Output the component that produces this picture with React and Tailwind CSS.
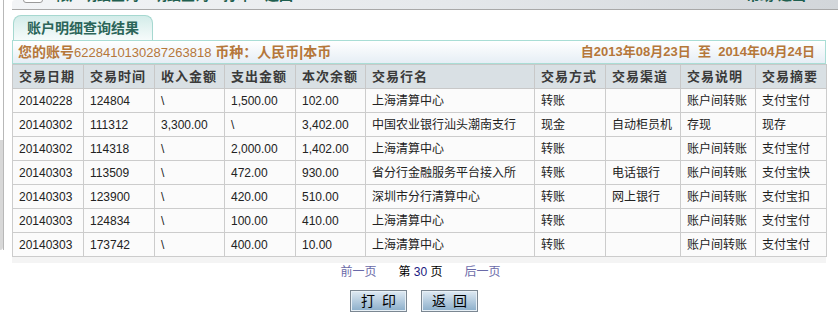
import React from "react"

const cols = [71, 71, 70, 71, 70, 169, 71, 75, 75, 71]

const headers = ["交易日期", "交易时间", "收入金额", "支出金额", "本次余额", "交易行名", "交易方式", "交易渠道", "交易说明", "交易摘要"]

const rows = [
  ["20140228", "124804", "\\", "1,500.00", "102.00", "上海清算中心", "转账", "", "账户间转账", "支付宝付"],
  ["20140302", "111312", "3,300.00", "\\", "3,402.00", "中国农业银行汕头潮南支行", "现金", "自动柜员机", "存现", "现存"],
  ["20140302", "114318", "\\", "2,000.00", "1,402.00", "上海清算中心", "转账", "", "账户间转账", "支付宝付"],
  ["20140303", "113509", "\\", "472.00", "930.00", "省分行金融服务平台接入所", "转账", "电话银行", "账户间转账", "支付宝快"],
  ["20140303", "123900", "\\", "420.00", "510.00", "深圳市分行清算中心", "转账", "网上银行", "账户间转账", "支付宝扣"],
  ["20140303", "124834", "\\", "100.00", "410.00", "上海清算中心", "转账", "", "账户间转账", "支付宝付"],
  ["20140303", "173742", "\\", "400.00", "10.00", "上海清算中心", "转账", "", "账户间转账", "支付宝付"],
]

function Button({ children }) {
  return (
    <button className="w-[57px] h-[22px] border border-[#7b8792] p-0">
      <div className="h-full border border-[#e8f0f6] bg-gradient-to-b from-[#dbe7f1] to-[#8fb1cc] flex items-center justify-center text-[14px] leading-[16px] text-black tracking-[7px] pl-[7px]">
        {children}
      </div>
    </button>
  )
}

export default function App() {
  return (
    <div className="w-[838px] h-[336px] bg-white overflow-hidden flex font-['Liberation_Sans','Noto_Sans_CJK_SC',sans-serif] text-[12px] text-[#1a1a1a]">
      {/* left frame edge */}
      <div className="w-[4px] h-[250px] flex flex-col border-r border-[#b8b8b8]">
        <div className="h-[140px] bg-white" />
        <div className="flex-1 bg-[#d8d8d8] rounded-br-[3px]" />
      </div>

      <div className="ml-[8px] w-[826px] flex flex-col">
        {/* top bar, mostly scrolled away */}
        <div className="h-[10px] border-b border-[#a8a8a8] rounded-tl-[3px] bg-gradient-to-r from-[#f2f4f6] via-[#e6e9ec] to-[#d2d6da] overflow-hidden relative">
          <div className="absolute left-[11px] top-[-14px] w-[20px] h-[17px] bg-white border border-[#9a9a9a] rounded-[3px]" />
          <div className="absolute left-[43px] top-[-15px] text-[14px] leading-[20px] font-bold text-[#1f5f4f] whitespace-nowrap">
            帐户明细查询　明细查询　打印　返回
          </div>
          <div className="absolute left-[734px] top-[-15px] text-[14px] leading-[20px] font-bold text-[#1f5f4f] whitespace-nowrap">
            帮助 退出
          </div>
        </div>

        {/* tab */}
        <div className="mt-[5px] ml-[1px] w-[140px] h-[25px] border border-b-0 border-[#a6d8d0] rounded-t-[8px] bg-gradient-to-b from-[#d3ece9] to-[#f6fbfb] flex items-center justify-center text-[14px] font-bold text-[#2b6559]">
          账户明细查询结果
        </div>

        <div className="w-[814px]">
          {/* account bar */}
          <div className="h-[24px] border border-[#a9ddd5] bg-gradient-to-b from-[#ffffff] to-[#e6eef5] flex items-center justify-between px-[5px] text-[14px] font-bold text-[#b5773a]">
            <div>
              您的账号<span className="font-normal text-[13px]">6228410130287263818</span> 币种：人民币|本币
            </div>
            <div className="pr-[5px] text-[13px]">自2013年08月23日&nbsp;&nbsp;至&nbsp;&nbsp;2014年04月24日</div>
          </div>

          {/* table */}
          <div className="bg-[#f4f4f4] pb-[6px]">
            <table className="w-[814px] table-fixed border-collapse">
              <colgroup>
                {cols.map((w, i) => (
                  <col key={i} style={{ width: w }} />
                ))}
              </colgroup>
              <thead>
                <tr className="h-[24px] bg-[#d9e0e4]">
                  {headers.map((h) => (
                    <th key={h} className="border border-[#c8c8c8] text-left pl-[6px] text-[13px] leading-[16px] font-bold text-[#3a3a3a] tracking-[1px] whitespace-nowrap">
                      {h}
                    </th>
                  ))}
                </tr>
              </thead>
              <tbody>
                {rows.map((r, ri) => (
                  <tr key={ri} className="h-[24px] bg-[#fbfbfb]">
                    {r.map((c, ci) => (
                      <td key={ci} className="border border-[#cccccc] pl-[6px] leading-[16px] whitespace-nowrap text-[#222]">
                        {c}
                      </td>
                    ))}
                  </tr>
                ))}
              </tbody>
            </table>
          </div>

          {/* pagination */}
          <div className="mt-[1px] h-[16px] leading-[16px] flex justify-center gap-[22px] text-[12px] pl-[3px]">
            <span className="text-[#6a6aa8]">前一页</span>
            <span className="text-black">
              第 <span className="text-[#1a1a80]">30</span> 页
            </span>
            <span className="text-[#6a6aa8]">后一页</span>
          </div>

          <div className="mt-[10px] flex justify-center gap-[14px] pr-[10px]">
            <Button>打印</Button>
            <Button>返回</Button>
          </div>
        </div>
      </div>
    </div>
  )
}
